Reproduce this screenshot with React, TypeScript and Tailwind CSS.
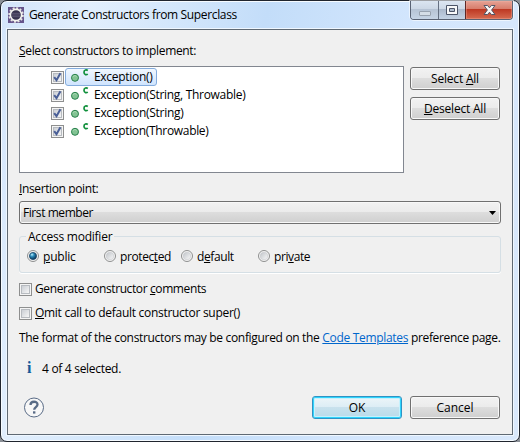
import type { ReactNode } from 'react';

function Check({ checked = false }: { checked?: boolean }) {
  return (
    <span className="flex size-[13px] shrink-0 border border-[#8e8f8f] bg-[#f4f4f4] p-px">
      <span className="block size-[9px] border border-[#b7bbc0] bg-linear-to-br from-[#cbcfd5] to-[#f6f6f6]">
        {checked && (
          <svg width="9" height="10" viewBox="0 0 9 10" className="-mt-[2px] -ml-px block overflow-visible">
            <path d="M1.2 5.2 L3.5 8.2 L7.4 1.3" fill="none" stroke="#4a5f97" strokeWidth="2" />
          </svg>
        )}
      </span>
    </span>
  );
}

function Radio({ checked = false }: { checked?: boolean }) {
  return (
    <svg width="12" height="12" viewBox="0 0 12 12" className="shrink-0">
      <defs>
        <radialGradient id="radio-on" cx="0.35" cy="0.3" r="0.75">
          <stop offset="0" stopColor="#b8f0ff" />
          <stop offset="0.4" stopColor="#2788b8" />
          <stop offset="1" stopColor="#082c4e" />
        </radialGradient>
        <linearGradient id="radio-off" x1="0" y1="0" x2="1" y2="1">
          <stop offset="0" stopColor="#bfc3c8" />
          <stop offset="1" stopColor="#fafafa" />
        </linearGradient>
      </defs>
      <circle cx="6" cy="6" r="5.5" fill="#f6f6f6" stroke="#8e8f8f" />
      <circle cx="6" cy="6" r="3.8" fill="url(#radio-off)" stroke="#c8cacd" strokeWidth="0.6" />
      {checked && <circle cx="6" cy="6" r="3.5" fill="url(#radio-on)" stroke="#19466b" strokeWidth="0.8" />}
    </svg>
  );
}

function Button({ children, primary = false }: { children: ReactNode; primary?: boolean }) {
  return (
    <button
      className={
        primary
          ? 'h-[23px] w-[90px] rounded-[3px] border border-[#2f93c4] bg-[linear-gradient(#edf5f9,#dcedf5_49%,#c8e1ed_50%,#b9dbea)] shadow-[inset_0_0_0_1px_#2fd4fc,inset_0_0_0_2px_#c5f1fd]'
          : 'h-[23px] w-[90px] rounded-[3px] border border-[#707070] bg-[linear-gradient(#f2f2f2,#ebebeb_49%,#dddddd_50%,#cfcfcf)] shadow-[inset_0_0_0_1px_#f8f8f8]'
      }
    >
      <span className="block pt-px leading-[20px]">{children}</span>
    </button>
  );
}

const rows = [
  { text: 'Exception()', track: 'tracking-[-0.3px]' },
  { text: 'Exception(String, Throwable)', track: 'tracking-[-0.3px]' },
  { text: 'Exception(String)', track: 'tracking-[-0.29px]' },
  { text: 'Exception(Throwable)', track: 'tracking-[-0.32px]' },
];

function Row({ text, track, selected }: { text: string; track: string; selected: boolean }) {
  return (
    <div className="flex h-[18px] items-center">
      <Check checked />
      <div
        className={
          selected
            ? 'ml-px flex h-[18px] w-[92px] items-center rounded-[3px] border border-[#84acdd] bg-linear-to-b from-[#f1f7fe] to-[#cfe4fe]'
            : 'ml-px flex h-[18px] items-center border border-transparent'
        }
      >
        <svg width="28" height="16" viewBox="0 0 28 16" className="shrink-0">
          <circle cx="9" cy="8.8" r="3.5" fill="#82c393" stroke="#28804b" />
          <path d="M7 7.8a2 2 0 0 1 3.5-.3" stroke="#b2dfbb" fill="none" />
          <path d="M21.8 1.5C20.6.6 18 .4 18 3.3S20.6 6 21.8 5.1" fill="none" stroke="#0f8f3b" strokeWidth="1.7" />
        </svg>
        <span className={'leading-[16px] ' + track}>{text}</span>
      </div>
    </div>
  );
}

function AppIcon() {
  return (
    <svg width="16" height="16" viewBox="0 0 16 16">
      <rect width="16" height="16" fill="#66558c" />
      <circle cx="8" cy="8" r="6.9" fill="none" stroke="#e8e8e4" strokeWidth="1.8" strokeDasharray="2 1.613" />
      <circle cx="8" cy="8" r="5.6" fill="#37334e" stroke="#f4f4f0" strokeWidth="1.6" />
      <path d="M4 6.3h8M3.5 8h9M4 9.7h8" stroke="#67627d" strokeWidth="0.8" />
    </svg>
  );
}

function WindowControls() {
  return (
    <div className="flex h-[19px] w-[103px] overflow-hidden rounded-b-[4px] border border-t-0 border-[#596273] shadow-[0_0_0_1px_#ffffff90]">
      <div className="flex w-[28px] items-center justify-center border-r border-[#657082] bg-[linear-gradient(#dbe5f1,#ccd7e5_45%,#b6c3d4_46%,#c6d4e5)]">
        <span className="mt-[6px] h-[5px] w-[12px] rounded-[1px] border border-[#98a2af] bg-[#d5dde6]" />
      </div>
      <div className="flex w-[27px] items-center justify-center border-r border-[#5f2825] bg-[linear-gradient(#dce6f2,#cdd8e6_45%,#abb9cc_46%,#c4d3e5)]">
        <svg width="12" height="10" viewBox="0 0 12 10">
          <path d="M.5.5h11v9H.5z" fill="#f8f9fa" stroke="#4c5568" />
          <path d="M3.5 3.5h5v3h-5z" fill="#b0bdce" stroke="#4c5568" />
        </svg>
      </div>
      <div className="flex flex-1 items-center justify-center bg-[linear-gradient(#e6a295,#d77b69_45%,#bd3823_46%,#d66b50)] shadow-[inset_0_0_0_1px_#f2b0a260]">
        <svg width="13" height="12" viewBox="0 0 13 12">
          <path
            d="M1 1.5h3.6l1.9 2.3 1.9-2.3H12L8.6 6l3.4 4.5H8.4L6.5 8.2l-1.9 2.3H1L4.4 6z"
            fill="#f7f7f7"
            stroke="#535666"
            strokeLinejoin="round"
          />
        </svg>
      </div>
    </div>
  );
}

export default function App() {
  return (
    <div className="h-[442px] w-[520px] overflow-hidden bg-[#8b9097] font-['Open_Sans',sans-serif] text-[12px] leading-[16px] text-black">
      <div className="flex h-[442px] w-[520px] flex-col rounded-[7px] border border-[#20252e] bg-[linear-gradient(100deg,#d3e5fb,#e2effd_15%,#c3ddf9_45%,#d3e6fd_70%,#d9e8fb)] px-[6px] shadow-[inset_0_0_0_1px_#f6fbff]">
        <header className="flex h-[28px] shrink-0 items-start pl-px">
          <div className="mt-[6px]"><AppIcon /></div>
          <h1 className="mt-[6px] ml-[5px] flex-1 whitespace-nowrap tracking-[-0.35px]">Generate Constructors from Superclass</h1>
          <WindowControls />
        </header>

        <main className="flex h-[406px] w-[506px] flex-col border border-[#5f6973] bg-[#f0f0f0] px-[11px] pt-[12px] shadow-[0_0_0_1px_#eff7ff]">
          <div className="h-[24px] pt-px tracking-[-0.34px]"><u>S</u>elect constructors to implement:</div>
          <section className="flex gap-[6px]">
            <div className="h-[107px] w-[385px] border border-[#828790] bg-white pt-px pl-[31px]">
              {rows.map((r, i) => (
                <Row key={r.text} text={r.text} track={r.track} selected={i === 0} />
              ))}
            </div>
            <div className="flex flex-col gap-[7px] pt-px tracking-[-0.2px]">
              <Button>Select <u>A</u>ll</Button>
              <Button><u>D</u>eselect All</Button>
            </div>
          </section>

          <div className="mt-[8px] h-[20px] tracking-[-0.38px]"><u>I</u>nsertion point:</div>
          <div className="flex h-[23px] w-[482px] shrink-0 items-center justify-between rounded-[3px] border border-[#707070] bg-[linear-gradient(#f2f2f2,#ebebeb_49%,#dddddd_50%,#cfcfcf)] pr-[4px] pl-[3px] shadow-[inset_0_0_0_1px_#f8f8f8]">
            <span className="tracking-[-0.43px]">First member</span>
            <svg width="7" height="4" viewBox="0 0 7 4"><path d="M0 0h7L3.5 4z" /></svg>
          </div>

          <fieldset className="mt-[4px] h-[45px] w-[482px] shrink-0 rounded-[3px] border border-[#d5dfe5] pl-[7px] shadow-[0_1px_0_#fff]">
            <legend className="-ml-px px-[2px] pt-px leading-[15px] tracking-[-0.23px]">Access modifier</legend>
            <div className="mt-[4px] flex tracking-[-0.4px]">
              <label className="flex w-[77px] items-center gap-[4px]"><Radio checked /><span className="-mb-px pt-px tracking-[-0.2px]"><u>p</u>ublic</span></label>
              <label className="flex w-[77px] items-center gap-[4px]"><Radio /><span className="-mb-px pt-px">protec<u>t</u>ed</span></label>
              <label className="flex w-[77px] items-center gap-[4px]"><Radio /><span className="-mb-px pt-px">d<u>e</u>fault</span></label>
              <label className="flex items-center gap-[4px]"><Radio /><span className="-mb-px pt-px">pri<u>v</u>ate</span></label>
            </div>
          </fieldset>

          <label className="mt-[7px] flex h-[18px] items-center gap-[3px] tracking-[-0.39px]"><Check /><span>Generate constructor <u>c</u>omments</span></label>
          <label className="mt-[6px] flex h-[18px] items-center gap-[3px] tracking-[-0.29px]"><Check /><span><u>O</u>mit call to default constructor super()</span></label>
          <p className="mt-[8px] whitespace-nowrap tracking-[-0.32px]">
            The format of the constructors may be configured on the <a className="text-[#0066cc] underline">Code Templates</a> preference page.
          </p>
          <div className="mt-[14px] flex h-[17px] items-center">
            <span className="-mt-[2px] ml-[8px] w-[15px] font-['Liberation_Serif',serif] text-[16px] font-bold text-[#145a99]">i</span>
            <span className="tracking-[-0.3px]">4 of 4 selected.</span>
          </div>
          <footer className="mt-[19px] flex h-[23px] items-center gap-[8px]">
            <svg width="22" height="22" viewBox="0 0 22 22" className="mr-auto ml-[4px]">
              <circle cx="11" cy="10.5" r="9.5" fill="#f7f7f7" stroke="#596b86" />
              <path d="M7.5 8C7.5 3.7 14.5 3.8 14.5 7.5c0 2.5-3.3 2.6-3.3 5.2" fill="none" stroke="#596b86" strokeWidth="2.3" />
              <path d="M10 14.3h2.4v2.3H10z" fill="#596b86" />
            </svg>
            <Button primary>OK</Button>
            <Button>Cancel</Button>
            <span className="-ml-[7px] w-0" />
          </footer>
        </main>
      </div>
    </div>
  );
}
